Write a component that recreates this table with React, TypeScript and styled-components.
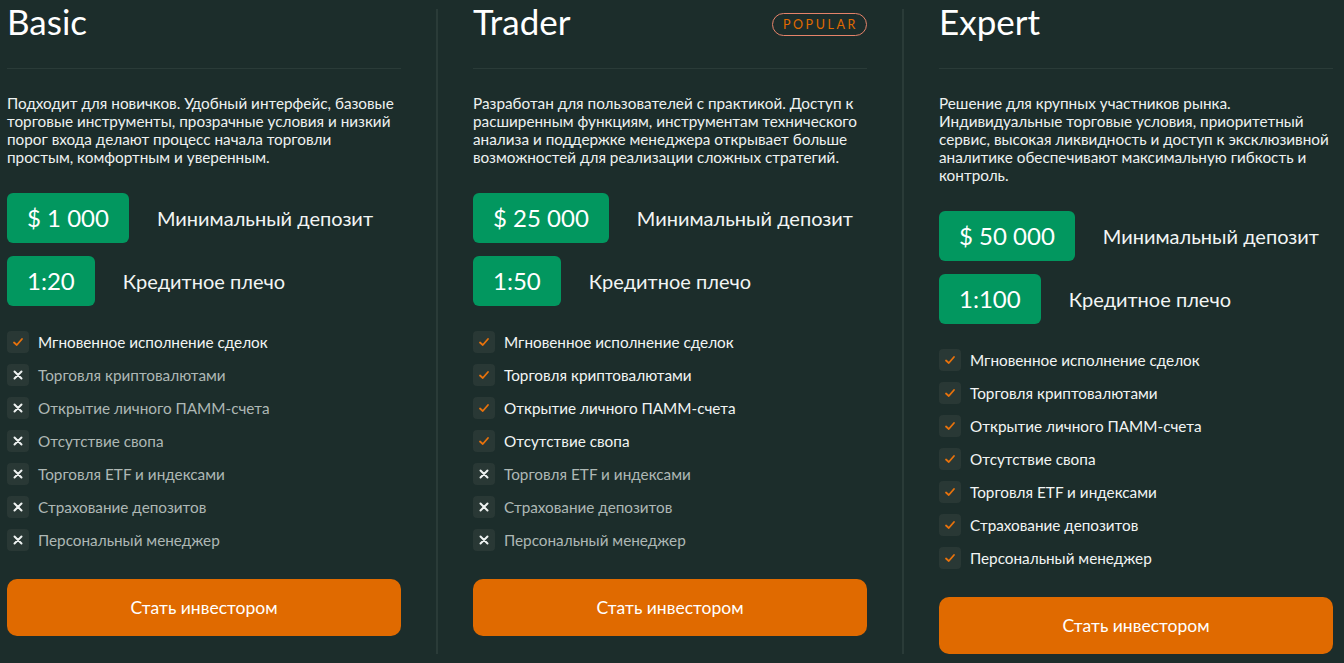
import React from "react";
import styled, { createGlobalStyle } from "styled-components";

type Plan = {
  name: string;
  popular?: boolean;
  text: string;
  deposit: string;
  leverage: string;
  included: number;
};

const FEATURES = [
  "Мгновенное исполнение сделок",
  "Торговля криптовалютами",
  "Открытие личного ПАММ-счета",
  "Отсутствие свопа",
  "Торговля ETF и индексами",
  "Страхование депозитов",
  "Персональный менеджер",
];

const PLANS: Plan[] = [
  {
    name: "Basic",
    text: "Подходит для новичков. Удобный интерфейс, базовые торговые инструменты, прозрачные условия и низкий порог входа делают процесс начала торговли простым, комфортным и уверенным.",
    deposit: "$ 1 000",
    leverage: "1:20",
    included: 1,
  },
  {
    name: "Trader",
    popular: true,
    text: "Разработан для пользователей с практикой. Доступ к расширенным функциям, инструментам технического анализа и поддержке менеджера открывает больше возможностей для реализации сложных стратегий.",
    deposit: "$ 25 000",
    leverage: "1:50",
    included: 4,
  },
  {
    name: "Expert",
    text: "Решение для крупных участников рынка. Индивидуальные торговые условия, приоритетный сервис, высокая ликвидность и доступ к эксклюзивной аналитике обеспечивают максимальную гибкость и контроль.",
    deposit: "$ 50 000",
    leverage: "1:100",
    included: 7,
  },
];

function CheckIcon() {
  return (
    <svg width="12" height="12" viewBox="0 0 12 12" fill="none">
      <polyline
        points="2,6.5 4.8,9 10,3"
        stroke="#e8720c"
        strokeWidth="1.8"
        strokeLinecap="round"
        strokeLinejoin="round"
      />
    </svg>
  );
}

function CrossIcon() {
  return (
    <svg width="10" height="10" viewBox="0 0 10 10" fill="none">
      <path d="M1.5 1.5 L8.5 8.5 M8.5 1.5 L1.5 8.5" stroke="#eef2f1" strokeWidth="2" strokeLinecap="round" />
    </svg>
  );
}

export default function App() {
  return (
    <>
      <GlobalStyle />
      <Page>
        {PLANS.map((plan, i) => (
          <React.Fragment key={plan.name}>
            {i > 0 && <Separator />}
            <Column>
              <TitleRow>
                <Title>{plan.name}</Title>
                {plan.popular && <Badge>POPULAR</Badge>}
              </TitleRow>
              <Divider />
              <Description>{plan.text}</Description>
              <Terms>
                <TermRow>
                  <ValueBox>{plan.deposit}</ValueBox>
                  <TermLabel>Минимальный депозит</TermLabel>
                </TermRow>
                <TermRow>
                  <ValueBox>{plan.leverage}</ValueBox>
                  <TermLabel>Кредитное плечо</TermLabel>
                </TermRow>
              </Terms>
              <FeatureList>
                {FEATURES.map((f, idx) => {
                  const on = idx < plan.included;
                  return (
                    <Feature key={f} $on={on}>
                      <IconBox>{on ? <CheckIcon /> : <CrossIcon />}</IconBox>
                      <span>{f}</span>
                    </Feature>
                  );
                })}
              </FeatureList>
              <InvestButton>Стать инвестором</InvestButton>
            </Column>
          </React.Fragment>
        ))}
      </Page>
    </>
  );
}

const GlobalStyle = createGlobalStyle`
  * {
    box-sizing: border-box;
  }
  body, html, #root {
    margin: 0;
    padding: 0;
    height: 100%;
    background: #1c2d2b;
    font-family: Lato, "Open Sans", sans-serif;
    color: #eef2f1;
    overflow: hidden;
  }
`;

const Page = styled.div`
  display: flex;
  gap: 35px;
  height: 663px;
  padding-left: 7px;
`;

const Separator = styled.div`
  width: 2px;
  margin: 9px 0;
  background: #2a3b38;
`;

const Column = styled.div`
  width: 394px;
  flex-shrink: 0;
  display: flex;
  flex-direction: column;
`;

const TitleRow = styled.div`
  display: flex;
  justify-content: space-between;
  align-items: flex-start;
`;

const Title = styled.h2`
  margin: 0;
  font-size: 35px;
  line-height: 42px;
  font-weight: 400;
  color: #ffffff;
`;

const Badge = styled.span`
  margin-top: 13px;
  height: 23px;
  padding: 0 8px 0 10px;
  border: 1px solid #e5836a;
  border-radius: 12px;
  color: #e06a00;
  font-size: 12.5px;
  line-height: 21px;
  letter-spacing: 2.6px;
`;

const Divider = styled.div`
  height: 1px;
  margin-top: 26px;
  background: #2a3b38;
`;

const Description = styled.p`
  margin: 25px 0 0;
  font-size: 15.3px;
  line-height: 18px;
  color: #eef2f1;
`;

const Terms = styled.div`
  display: flex;
  flex-direction: column;
  gap: 13px;
  margin-top: 27px;
`;

const TermRow = styled.div`
  display: flex;
  align-items: center;
  gap: 28px;
`;

const ValueBox = styled.div`
  height: 50px;
  padding: 0 20px;
  border-radius: 6px;
  background: #02975f;
  color: #ffffff;
  font-size: 24px;
  line-height: 50px;
`;

const TermLabel = styled.span`
  font-size: 20px;
  color: #f2f5f4;
`;

const FeatureList = styled.ul`
  list-style: none;
  margin: 25px 0 0;
  padding: 0;
  display: flex;
  flex-direction: column;
  gap: 11px;
`;

const Feature = styled.li<{ $on: boolean }>`
  display: flex;
  align-items: center;
  gap: 9px;
  height: 22px;
  font-size: 15.3px;
  color: ${({ $on }) => ($on ? "#f2f5f4" : "#aeb8b5")};
`;

const IconBox = styled.span`
  width: 22px;
  height: 22px;
  border-radius: 4px;
  background: #293835;
  display: flex;
  align-items: center;
  justify-content: center;
`;

const InvestButton = styled.button`
  margin-top: 28px;
  height: 57px;
  border: none;
  border-radius: 10px;
  background: #e06a00;
  color: #ffffff;
  font-family: inherit;
  font-size: 17.5px;
  cursor: pointer;
`;
